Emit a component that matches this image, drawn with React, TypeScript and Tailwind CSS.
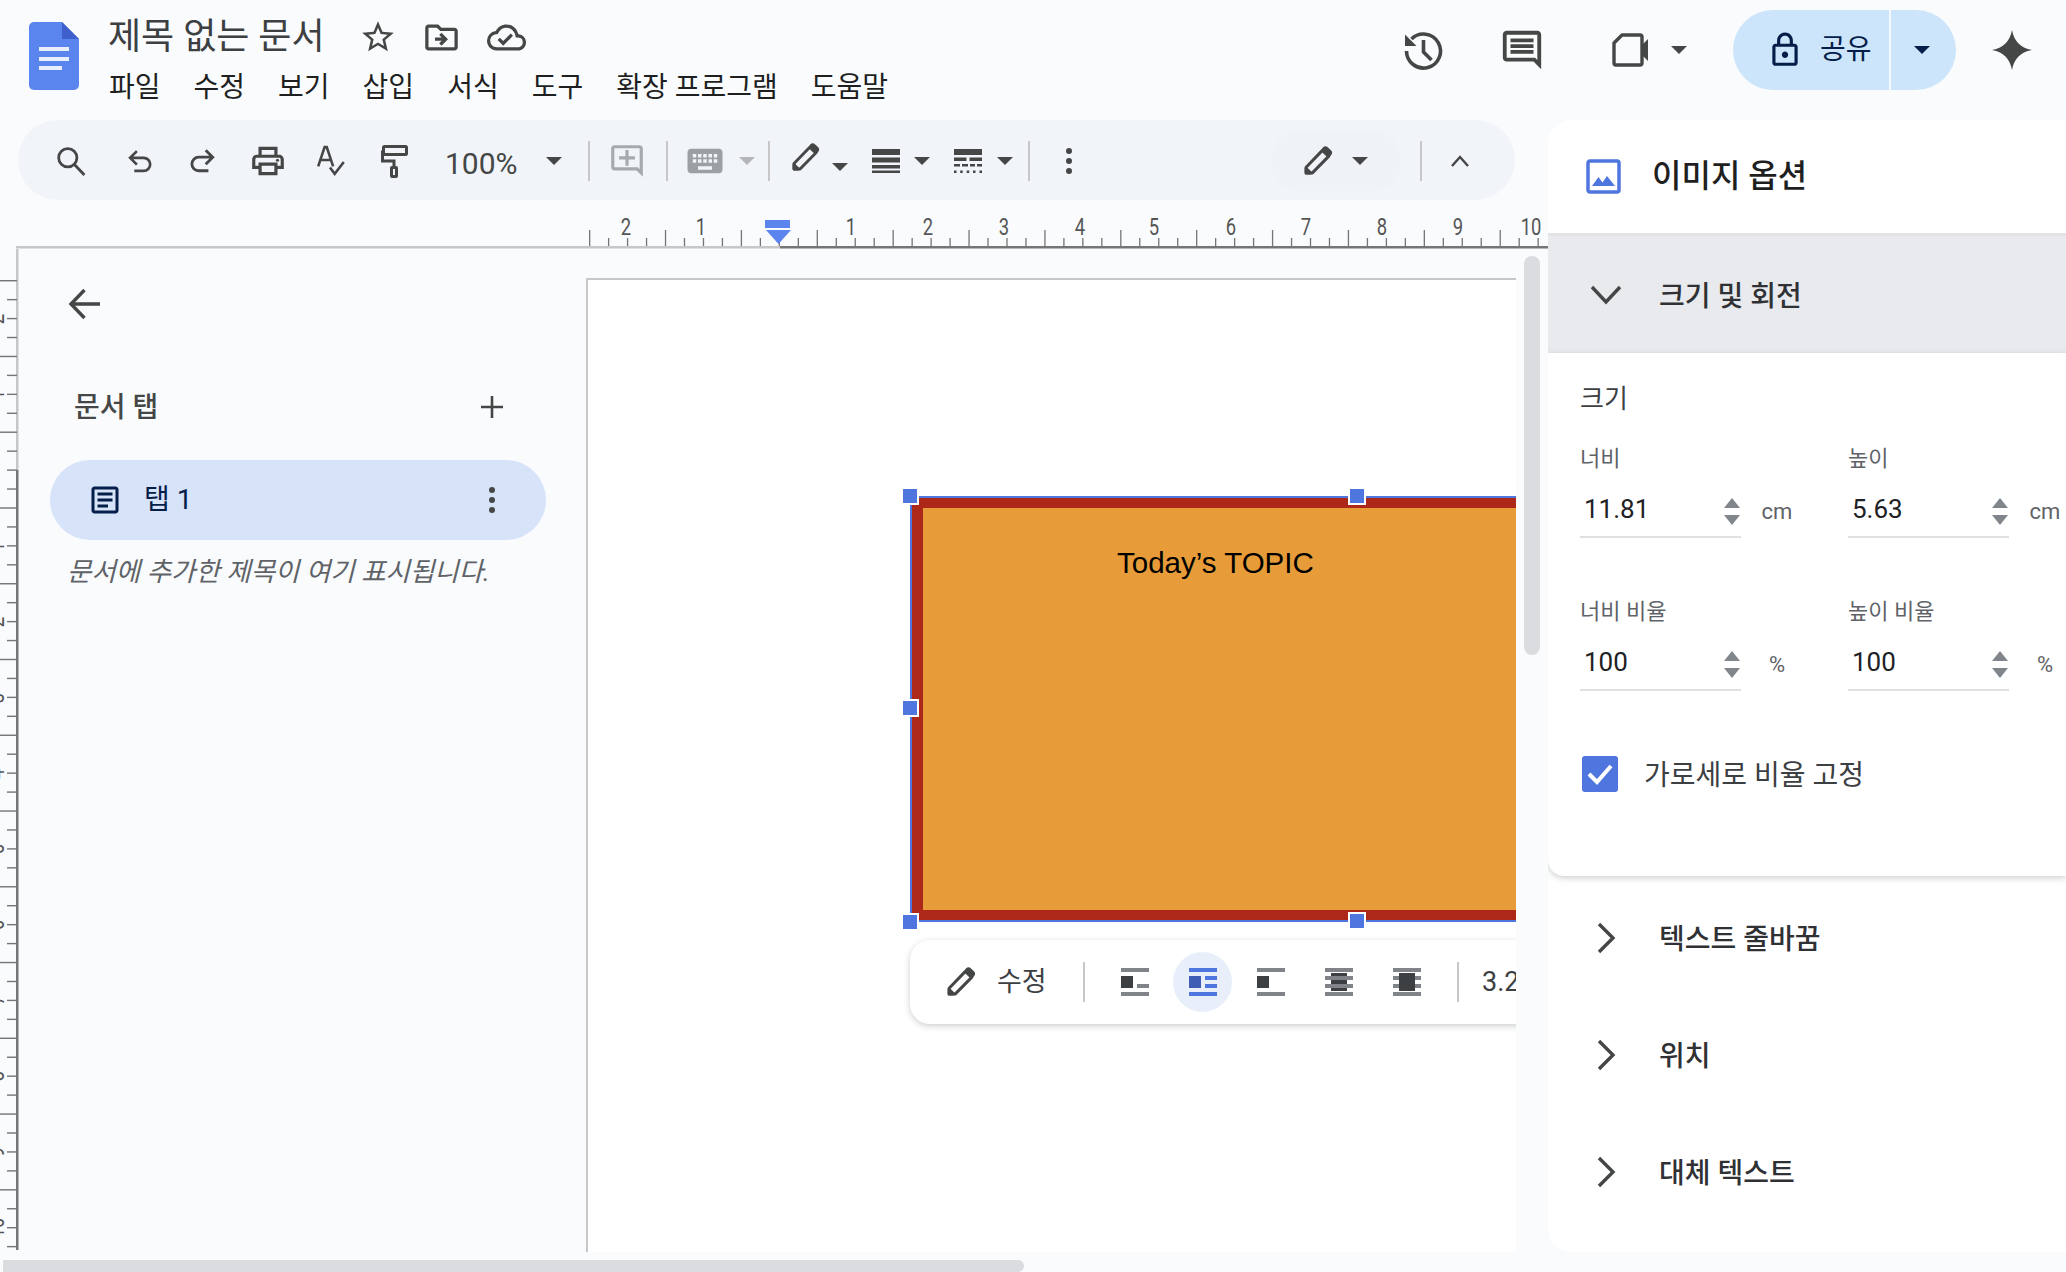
import {
  MdKeyboard,
  MdOutlineAddComment,
  MdOutlineArticle,
  MdOutlineCloudDone,
  MdOutlineComment,
  MdOutlineDriveFileMove,
  MdOutlineLock,
  MdOutlinePrint,
  MdOutlineStarBorder,
} from "react-icons/md";

const menus = ["파일", "수정", "보기", "삽입", "서식", "도구", "확장 프로그램", "도움말"];

function Caret({ className = "border-t-[#444746]" }: { className?: string }) {
  return <div className={`h-0 w-0 shrink-0 border-x-8 border-t-[8px] border-x-transparent ${className}`} />;
}

function Divider({ className = "" }: { className?: string }) {
  return <div className={`h-10 w-0.5 shrink-0 bg-[#c7c7c7] ${className}`} />;
}

function Slot({ className = "", children }: { className?: string; children: React.ReactNode }) {
  return <div className={`flex h-10 w-7 shrink-0 items-center justify-center ${className}`}>{children}</div>;
}

function Pencil({ size = 30 }: { size?: number }) {
  return (
    <svg width={size} height={size} viewBox="0 0 24 24" className="shrink-0" fill="none" stroke="#444746" strokeWidth="2.4" strokeLinejoin="round">
      <path d="M2.500 21.500V17L15.500 3.500l5 4.800-13 13.200z" />
      <path d="M16 3l1-1.200a1.400 1.400 0 0 1 2 0l2.700 2.600a1.400 1.400 0 0 1 0 2L20.600 8" fill="#444746" />
      <path d="M2.500 21.500V18l3.500 3.500z" fill="#444746" />
    </svg>
  );
}

function Kebab({ className = "fill-[#444746]" }: { className?: string }) {
  return (
    <svg width="8" height="28" viewBox="0 0 8 28" className={className}>
      <circle cx="4" cy="4" r="3" />
      <circle cx="4" cy="14" r="3" />
      <circle cx="4" cy="24" r="3" />
    </svg>
  );
}

function Toolbar() {
  return (
    <div className="ml-[18px] flex h-20 w-[1497px] items-center rounded-full bg-[#f1f4f9] pl-[39px] pt-0.5">
      <Slot>
        <svg width="30" height="30" viewBox="0 0 28 28" fill="none" stroke="#444746" strokeWidth="2.6" className="shrink-0">
          <circle cx="11" cy="11" r="8.500" />
          <path d="M17 17l9.500 10" />
        </svg>
      </Slot>
      <Slot className="ml-10">
        <svg width="25" height="25" viewBox="0 0 24 24" fill="none" stroke="#444746" strokeWidth="2.6">
          <path d="M9.500 2L3 8.500 9.500 15M3 8.500h13a5.800 5.800 0 0 1 0 12.500H7" />
        </svg>
      </Slot>
      <Slot className="ml-9">
        <svg width="26" height="26" viewBox="0 0 24 24" fill="none" stroke="#444746" strokeWidth="2.6">
          <path d="M14.500 2L21 8.500 14.500 15M21 8.500H8a5.800 5.800 0 0 0 0 12.500h9" />
        </svg>
      </Slot>
      <Slot className="ml-[37px] text-[#444746]">
        <MdOutlinePrint size={38} className="shrink-0" />
      </Slot>
      <Slot className="ml-8">
        <svg width="30" height="32" viewBox="0 0 28 30" fill="none" stroke="#444746" strokeWidth="2.4" className="ml-1.5 shrink-0">
          <path d="M2 20L8 2h2l6 18M4.500 14h9" />
          <path d="M13 21l4.500 6L26 16" />
        </svg>
      </Slot>
      <Slot className="ml-[38px]">
        <svg width="27" height="33" viewBox="0 0 27 33" fill="none" stroke="#444746" strokeWidth="3" className="shrink-0">
          <rect x="2.500" y="1.500" width="23" height="8" rx="1" />
          <path d="M1.500 5.500V16H13v6" />
          <rect x="10.500" y="22.500" width="5" height="9" rx="0.5" />
        </svg>
      </Slot>
      <div className="ml-[37px] mt-1 w-[73px] shrink-0 text-[30px] text-[#444746]">100%</div>
      <Caret className="ml-7 border-t-[#444746]" />
      <Divider className="ml-[26px]" />
      <Slot className="ml-[23px]">
        <MdOutlineAddComment size={38} color="#a6a9ad" className="shrink-0" />
      </Slot>
      <Divider className="ml-[25px]" />
      <Slot className="ml-[23px]">
        <MdKeyboard size={42} color="#9c9fa3" className="shrink-0" />
      </Slot>
      <Caret className="ml-5 border-t-[#b4b6b9]" />
      <Divider className="ml-[13px]" />
      <Slot className="ml-[21px] -mt-2">
        <Pencil size={29} />
      </Slot>
      <Caret className="ml-[13px] mt-3 border-t-[#444746]" />
      <Slot className="ml-6">
        <svg width="28" height="24" viewBox="0 0 28 24" fill="#444746" className="shrink-0">
          <rect y="0" width="28" height="6" />
          <rect y="8.500" width="28" height="5" />
          <rect y="16" width="28" height="3.500" />
          <rect y="21.500" width="28" height="2.500" />
        </svg>
      </Slot>
      <Caret className="ml-3.5 border-t-[#444746]" />
      <Slot className="ml-6">
        <svg width="28" height="24" viewBox="0 0 28 24" fill="#444746" className="shrink-0">
          <rect y="0" width="28" height="6" />
          <rect y="8.500" width="12.500" height="3.500" />
          <rect x="15.500" y="8.500" width="12.500" height="3.500" />
          <rect y="15" width="6" height="2.500" />
          <rect x="8" y="15" width="6" height="2.500" />
          <rect x="16" y="15" width="5" height="2.500" />
          <rect x="23" y="15" width="5" height="2.500" />
          <rect y="21.500" width="2.500" height="2.500" />
          <rect x="6.200" y="21.500" width="2.500" height="2.500" />
          <rect x="12.700" y="21.500" width="2.500" height="2.500" />
          <rect x="19" y="21.500" width="2.500" height="2.500" />
          <rect x="25.500" y="21.500" width="2.500" height="2.500" />
        </svg>
      </Slot>
      <Caret className="ml-[15px] border-t-[#444746]" />
      <Divider className="ml-[15px]" />
      <Slot className="ml-[25px]">
        <Kebab />
      </Slot>
      <div className="ml-[188px] flex h-[60px] w-[130px] shrink-0 items-center rounded-full bg-[#eff3f8] pl-[32px]">
        <Pencil />
        <Caret className="ml-[19px] border-t-[#444746]" />
      </div>
      <Divider className="ml-[19px]" />
      <Slot className="ml-6">
        <svg width="20" height="12" viewBox="0 0 20 12" fill="none" stroke="#444746" strokeWidth="2.4">
          <path d="M2 11l8-9 8 9" />
        </svg>
      </Slot>
    </div>
  );
}

function HorizontalRuler() {
  const ticks = Array.from({ length: 52 }, (_, i) => i);
  const numbers = [
    { x: 626, n: 2 },
    { x: 701, n: 1 },
    { x: 851, n: 1 },
    { x: 928, n: 2 },
    { x: 1004, n: 3 },
    { x: 1080, n: 4 },
    { x: 1154, n: 5 },
    { x: 1231, n: 6 },
    { x: 1306, n: 7 },
    { x: 1382, n: 8 },
    { x: 1458, n: 9 },
    { x: 1531, n: 10 },
  ];
  return (
    <svg width="1548" height="49" viewBox="0 0 1548 49" className="block">
      <rect x="16" y="46" width="764" height="2.5" fill="#c7c7c7" />
      <rect x="780" y="46" width="768" height="2.5" fill="#757575" />
      {ticks.map((i) => (
        <rect key={i} x={589 + i * 18.97} y={i % 4 === 0 ? 30 : 38} width="1.3" height={i % 4 === 0 ? 16 : 8} fill="#757575" />
      ))}
      {numbers.map((item) => (
        <text
          key={item.x}
          transform={`translate(${item.x} 35) scale(0.8 1)`}
          textAnchor="middle"
          fontSize="23"
          fill="#555"
          fontFamily="Roboto, sans-serif"
        >
          {item.n}
        </text>
      ))}
      <rect x="765" y="20" width="25" height="8" fill="#5b84ee" />
      <path d="M766 30h25l-12.500 14z" fill="#5b84ee" />
    </svg>
  );
}

function VerticalRuler() {
  const ticks = Array.from({ length: 52 }, (_, i) => i);
  const numbers = [
    { y: 70, n: 2 },
    { y: 146, n: 1 },
    { y: 298, n: 1 },
    { y: 373, n: 2 },
    { y: 449, n: 3 },
    { y: 525, n: 4 },
    { y: 600, n: 5 },
    { y: 676, n: 6 },
    { y: 751, n: 7 },
    { y: 827, n: 8 },
    { y: 903, n: 9 },
    { y: 979, n: 10 },
  ];
  return (
    <svg width="19" height="1003" viewBox="0 0 19 1003" className="block shrink-0">
      <rect x="16" y="0" width="2.5" height="221" fill="#c7c7c7" />
      <rect x="16" y="221" width="2.5" height="780" fill="#757575" />
      {ticks.map((i) => (
        <rect key={i} x={i % 4 === 0 ? 0 : 7} y={31 + i * 18.94} width={i % 4 === 0 ? 17 : 10} height="1.4" fill="#757575" />
      ))}
      {numbers.map((item) => (
        <text
          key={item.y}
          transform={`translate(4 ${item.y}) rotate(-90) scale(0.8 1)`}
          textAnchor="middle"
          fontSize="23"
          fill="#555"
          fontFamily="Roboto, sans-serif"
        >
          {item.n}
        </text>
      ))}
    </svg>
  );
}

function Sidebar() {
  return (
    <div className="w-[567px] shrink-0">
      <svg width="32" height="32" viewBox="0 0 32 32" fill="none" stroke="#444746" strokeWidth="3.4" className="ml-[49px] mt-[39px]">
        <path d="M32 16H3M16.500 2L3 16l13.500 14" />
      </svg>
      <div className="ml-[55px] mt-[67px] flex h-10 w-[429px] items-center justify-between text-[28px] font-medium text-[#444746]">
        <span className="mt-0.5">문서 탭</span>
        <svg width="22" height="22" viewBox="0 0 22 22" stroke="#444746" strokeWidth="2.6">
          <path d="M11 0v22M0 11h22" />
        </svg>
      </div>
      <div className="ml-[31px] mt-[33px] flex h-20 w-[496px] items-center rounded-full bg-[#d7e3f9] pl-[37px] pr-[50px] text-[#041e49]">
        <MdOutlineArticle size={36} className="shrink-0" />
        <span className="ml-[21px] text-[28px]">탭 1</span>
        <Kebab className="ml-auto fill-[#444746]" />
      </div>
      <div className="ml-[48px] mt-3 h-10 whitespace-nowrap text-[26.5px] leading-10 text-[#5f6368] italic">
        문서에 추가한 제목이 여기 표시됩니다.
      </div>
    </div>
  );
}

function Handle({ className }: { className: string }) {
  return <div className={`absolute h-[18px] w-[18px] border-2 border-white bg-[#4f75de] ${className}`} />;
}

function WrapIcon({ variant }: { variant: number }) {
  const bar = variant === 2 ? "#4f75de" : "#808387";
  const dark = variant === 2 ? "#3f5db5" : "#3c4043";
  return (
    <svg width="28" height="28" viewBox="0 0 28 28" className="shrink-0">
      {variant === 4 ? <rect x="6" y="5" width="16" height="18" fill={dark} /> : null}
      <rect width="28" height="4" fill={bar} />
      <rect y="24" width="28" height="4" fill={bar} />
      {variant === 1 ? <rect x="16" y="16" width="12" height="4" fill={bar} /> : null}
      {variant === 2 ? (
        <>
          <rect x="16" y="8" width="12" height="4" fill={bar} />
          <rect x="16" y="16" width="12" height="4" fill={bar} />
        </>
      ) : null}
      {variant === 4 || variant === 5 ? (
        <>
          <rect y="8" width="28" height="4" fill={bar} />
          <rect y="16" width="28" height="4" fill={bar} />
        </>
      ) : null}
      {variant <= 3 ? <rect y="8" width="12" height="12" fill={dark} /> : null}
      {variant === 5 ? <rect x="6" y="5" width="16" height="18" fill={dark} /> : null}
    </svg>
  );
}

function Page() {
  return (
    <div className="mt-[29px] h-[974px] w-[930px] shrink-0 overflow-hidden border-l-2 border-t-2 border-[#c7c7c7] bg-white pl-[322px] pt-[216px]">
      <div className="relative h-[426px] w-[800px] border-2 border-[#4f75de] bg-[#e79c39]">
        <div className="h-full border-[10px] border-l-[11px] border-[#ae2819] pl-[194px] pt-[35px] font-['Liberation_Sans',sans-serif] text-[29.500px] leading-10 text-black">
          Today’s TOPIC
        </div>
        <Handle className="-left-[11px] -top-[11px]" />
        <Handle className="left-[436px] -top-[11px]" />
        <Handle className="-left-[11px] top-[201px]" />
        <Handle className="-left-[11px] top-[415px]" />
        <Handle className="left-[436px] top-[414px]" />
      </div>
      <div className="mt-[18px] flex h-[84px] w-[800px] items-center rounded-l-[20px] bg-white pl-[36px] shadow-[0_2px_6px_rgba(60,64,67,0.25)]">
        <Pencil />
        <span className="ml-[21px] w-[49px] shrink-0 whitespace-nowrap text-[27px] text-[#3c4043]">수정</span>
        <Divider className="ml-[37px]" />
        <div className="ml-9">
          <WrapIcon variant={1} />
        </div>
        <div className="ml-[24px] flex h-[60px] w-[59px] shrink-0 items-center justify-center rounded-full bg-[#e8effb]">
          <WrapIcon variant={2} />
        </div>
        <div className="ml-[25px]">
          <WrapIcon variant={3} />
        </div>
        <div className="ml-10">
          <WrapIcon variant={4} />
        </div>
        <div className="ml-10">
          <WrapIcon variant={5} />
        </div>
        <Divider className="ml-9" />
        <span className="ml-[23px] text-[27px] text-[#3c4043]">3.2</span>
      </div>
    </div>
  );
}

function Spinner() {
  return (
    <div className="mt-1.5 flex shrink-0 flex-col gap-[7px]">
      <div className="h-0 w-0 border-x-8 border-b-[10px] border-x-transparent border-b-[#80868b]" />
      <div className="h-0 w-0 border-x-8 border-t-[10px] border-x-transparent border-t-[#80868b]" />
    </div>
  );
}

function Field({ label, value, unit, spaced = false }: { label: string; value: string; unit: string; spaced?: boolean }) {
  return (
    <div className={spaced ? "mt-[59px]" : ""}>
      <div className="h-[30px] text-[22px] leading-[30px] text-[#5f6368]">{label}</div>
      <div className="mt-1.5 flex items-center">
        <div className="flex h-[58px] w-[161px] shrink-0 items-center justify-between border-b-2 border-[#e0e0e0] pl-1 pr-px text-[26px] text-[#202124]">
          <span className="mt-0.5">{value}</span>
          <Spinner />
        </div>
        <span className="ml-[20px] mt-1 w-8 text-center text-[22px] text-[#5f6368]">{unit}</span>
      </div>
    </div>
  );
}

function ChevronRight() {
  return (
    <svg width="32" height="32" viewBox="0 0 32 32" fill="none" stroke="#444746" strokeWidth="3.4" className="ml-px shrink-0">
      <path d="M8 2l14 14L8 30" />
    </svg>
  );
}

function CollapsedSection({ title }: { title: string }) {
  return (
    <div className="flex h-[117px] items-center pl-[42px]">
      <ChevronRight />
      <span className="ml-[36px] mt-1 text-[28px] font-medium text-[#303134]">{title}</span>
    </div>
  );
}

function ImagePanel() {
  return (
    <aside className="h-[1132px] w-[518px] shrink-0 overflow-hidden rounded-l-[24px] bg-white">
      <div className="flex h-[116px] items-center border-b-[3px] border-[#e3e3e3] pl-[38px]">
        <svg width="35" height="35" viewBox="0 0 35 35" className="shrink-0">
          <rect x="2" y="2" width="31" height="31" rx="2" fill="none" stroke="#4f75de" strokeWidth="3.5" />
          <path d="M6 27l6.500-9 4 5.500 4.500-6.500 8 10z" fill="#4f75de" />
        </svg>
        <span className="ml-[31px] -mt-0.5 text-[32px] font-medium text-[#1f1f1f]">이미지 옵션</span>
      </div>
      <div className="flex h-[117px] items-center bg-[#e8eaed] pl-[42px]">
        <svg width="32" height="20" viewBox="0 0 32 20" fill="none" stroke="#444746" strokeWidth="3.4" className="shrink-0">
          <path d="M2 2l14 15L30 2" />
        </svg>
        <span className="ml-[37px] mt-[5px] text-[28px] font-medium text-[#303134]">크기 및 회전</span>
      </div>
      <div className="h-[523px] rounded-bl-2xl bg-white pl-8 pt-[26px] shadow-[0_2px_6px_rgba(60,64,67,0.25)]">
        <div className="h-10 text-[26px] leading-10 text-[#3c4043]">크기</div>
        <div className="mt-[25px] grid grid-cols-[268px_220px]">
          <Field label="너비" value="11.81" unit="cm" />
          <Field label="높이" value="5.63" unit="cm" />
          <Field label="너비 비율" value="100" unit="%" spaced />
          <Field label="높이 비율" value="100" unit="%" spaced />
        </div>
        <div className="ml-0.5 mt-[65px] flex h-9 items-center">
          <div className="flex h-9 w-9 shrink-0 items-center justify-center rounded-[3px] bg-[#4f75de]">
            <svg width="26" height="22" viewBox="0 0 26 22" fill="none" stroke="white" strokeWidth="4">
              <path d="M2 11l8 8L24 3" />
            </svg>
          </div>
          <span className="ml-[26px] mt-[3px] text-[28px] text-[#3c4043]">가로세로 비율 고정</span>
        </div>
      </div>
      <div className="mt-[3px]">
        <CollapsedSection title="텍스트 줄바꿈" />
        <CollapsedSection title="위치" />
        <CollapsedSection title="대체 텍스트" />
      </div>
    </aside>
  );
}

export default function App() {
  return (
    <div className="h-[1272px] w-[2066px] overflow-hidden bg-[#f9fbfd] font-['Roboto','Noto_Sans_CJK_KR',sans-serif]">
      <header className="flex h-[120px]">
        <svg width="50" height="68" viewBox="0 0 50 68" className="ml-[29px] mt-[22px] shrink-0">
          <path d="M5 0h28l17 17v46a5 5 0 0 1-5 5H5a5 5 0 0 1-5-5V5a5 5 0 0 1 5-5z" fill="#5a85ee" />
          <path d="M33 0l17 17H33z" fill="#3f60cc" />
          <rect x="10" y="25" width="30" height="4" fill="#e8eefc" />
          <rect x="10" y="35" width="30" height="4" fill="#e8eefc" />
          <rect x="10" y="44" width="23" height="4" fill="#e8eefc" />
        </svg>
        <div className="ml-[29px] pt-[13px]">
          <div className="flex h-12 items-center text-[36px] text-[#3c4043]">
            <span className="w-[215px] shrink-0 whitespace-nowrap">제목 없는 문서</span>
            <div className="ml-[41px] flex w-7 justify-center text-[#444746]">
              <MdOutlineStarBorder size={38} className="shrink-0" />
            </div>
            <div className="ml-[35px] flex w-7 justify-center text-[#444746]">
              <MdOutlineDriveFileMove size={39} className="shrink-0" />
            </div>
            <div className="ml-[37px] flex w-7 justify-center text-[#444746]">
              <MdOutlineCloudDone size={39} className="shrink-0" />
            </div>
          </div>
          <nav className="ml-px mt-[7px] flex h-10 items-center gap-[33px] text-[28px] text-[#1f1f1f]">
            {menus.map((menu) => (
              <span key={menu} className="whitespace-nowrap">
                {menu}
              </span>
            ))}
          </nav>
        </div>
        <div className="ml-auto mr-[34px] mt-2.5 flex h-20 items-center">
          <div className="flex w-10 justify-center">
            <svg width="40" height="40" viewBox="0 0 40 40" fill="none" stroke="#444746" strokeWidth="3.6" className="shrink-0">
              <path d="M8.500 9A17 17 0 1 1 3.500 21" />
              <path d="M2 4.500V16h11.500z" fill="#444746" stroke="none" />
              <path d="M20.500 10v12l8 8" />
            </svg>
          </div>
          <div className="ml-[59px] flex w-10 justify-center text-[#444746]">
            <MdOutlineComment size={46} className="shrink-0" />
          </div>
          <svg width="48" height="36" viewBox="0 0 48 36" fill="none" className="ml-[65px]">
            <path d="M15 3h18a2 2 0 0 1 2 2v26a2 2 0 0 1-2 2H9a2 2 0 0 1-2-2V11z" stroke="#444746" strokeWidth="3.4" strokeLinejoin="round" />
            <path d="M35 13l6-6v22l-6-6z" fill="#444746" />
          </svg>
          <Caret className="ml-4 border-t-[#444746]" />
          <div className="ml-[46px] flex h-20 w-[223px] items-center rounded-full bg-[#cde5fb] text-[#041e49]">
            <MdOutlineLock size={38} className="ml-[33px] shrink-0" />
            <span className="ml-[16px] whitespace-nowrap text-[28px]">공유</span>
            <div className="ml-[17px] h-20 w-0.5 bg-[#f3f9fe]" />
            <Caret className="ml-[23px] border-t-[#041e49]" />
          </div>
          <svg width="40" height="40" viewBox="0 0 24 24" fill="#444746" className="ml-9">
            <path d="M12 0c1.300 6.700 4.700 10.500 12 12-7.300 1.500-10.700 5.300-12 12-1.300-6.700-4.700-10.500-12-12 7.300-1.500 10.700-5.300 12-12z" />
          </svg>
        </div>
      </header>
      <div className="flex">
        <div className="w-[1548px] shrink-0">
          <Toolbar />
          <HorizontalRuler />
          <div className="flex h-[1003px]">
            <VerticalRuler />
            <Sidebar />
            <Page />
            <div className="ml-2 mt-[7px] h-[399px] w-4 shrink-0 rounded-full bg-[#dadce0]" />
          </div>
          <div className="ml-[3px] mt-2 h-3 w-[1021px] rounded-l-md rounded-r-full bg-[#dadce0]" />
        </div>
        <ImagePanel />
      </div>
    </div>
  );
}
